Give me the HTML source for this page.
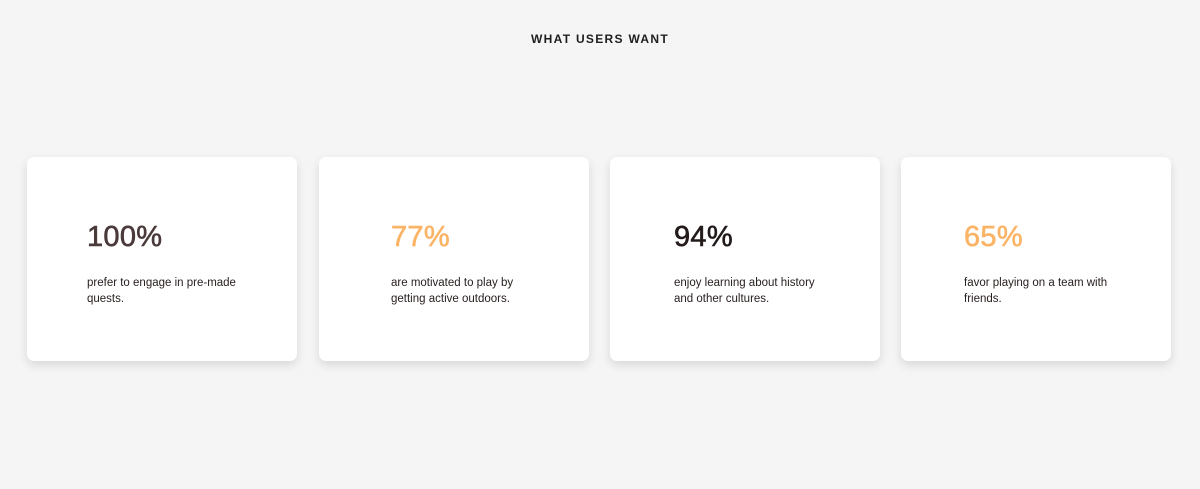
<!DOCTYPE html>
<html><head><style>
body{margin:0;width:1200px;height:489px;background:#f5f5f5;font-family:"Liberation Sans",sans-serif;position:relative;overflow:hidden}
h2{position:absolute;top:32px;left:0;width:1200px;text-align:center;margin:0;font-size:12px;letter-spacing:1.3px;font-weight:bold;color:#1e1e1e}
.c{position:absolute;top:157px;width:270px;height:204px;background:#fff;border-radius:7px;box-shadow:0 4px 10px rgba(0,0,0,.12)}
.n{position:absolute;top:218px;font-size:29px;line-height:38px;letter-spacing:0.3px;-webkit-text-stroke:0.6px currentColor}
.t{position:absolute;top:275px;font-size:11.5px;line-height:16px;color:#2a2020;width:160px}
</style></head><body>
<h2>WHAT USERS WANT</h2>
<div class="c" style="left:27px"></div>
<div class="c" style="left:319px"></div>
<div class="c" style="left:610px"></div>
<div class="c" style="left:901px"></div>
<div class="n" style="left:87px;color:#4a3a3a">100%</div>
<div class="n" style="left:391px;color:#fbb466">77%</div>
<div class="n" style="left:674px;color:#231a1a">94%</div>
<div class="n" style="left:964px;color:#fbb466">65%</div>
<div class="t" style="left:87px">prefer to engage in pre-made quests.</div>
<div class="t" style="left:391px;width:140px">are motivated to play by getting active outdoors.</div>
<div class="t" style="left:674px">enjoy learning about history and other cultures.</div>
<div class="t" style="left:964px">favor playing on a team with friends.</div>
</body></html>
